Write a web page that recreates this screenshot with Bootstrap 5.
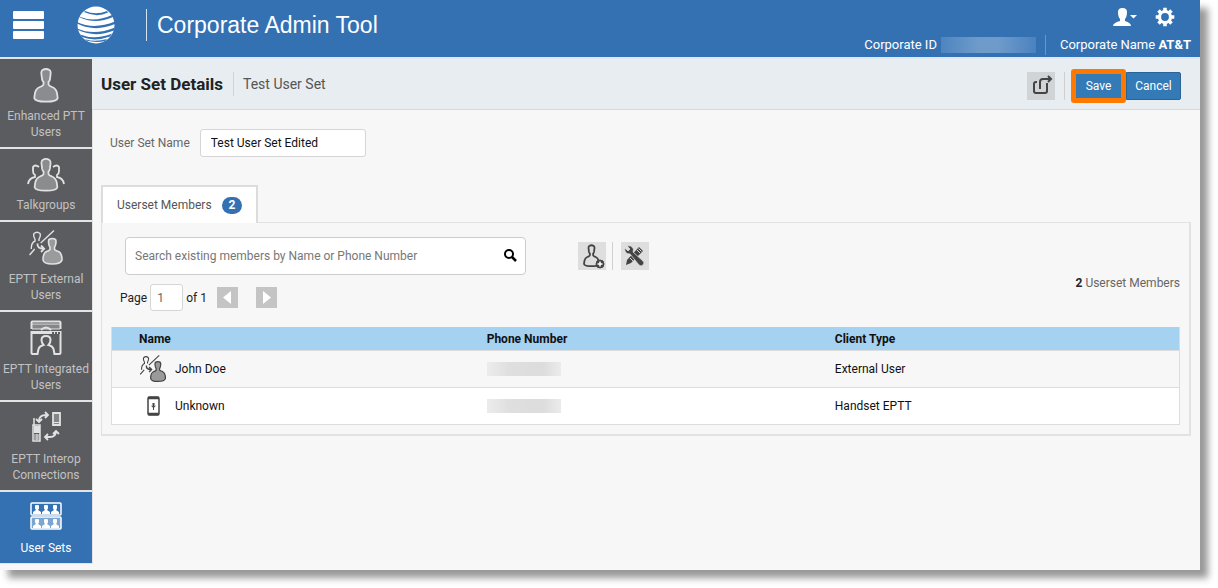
<!DOCTYPE html>
<html lang="en">
<head>
<meta charset="utf-8">
<meta name="viewport" content="width=device-width, initial-scale=1">
<title>Corporate Admin Tool</title>
<link href="https://cdn.jsdelivr.net/npm/bootstrap@5.3.0/dist/css/bootstrap.min.css" rel="stylesheet">
<style>
  body { font-family: Roboto, "Liberation Sans", Arial, sans-serif; font-size: 12px; line-height: 16px; color: #222; background: #fff; padding: 0 18px 18px 0; }
  .app { min-height: calc(100vh - 18px); background: #f7f7f7; box-shadow: 8px 8px 7px 0 #999; clip-path: inset(0 -18px -18px 0); }
  .topbar { background: #3371b3; color: #fff; height: 59px; border-bottom: 2px solid #dfe8f2; padding: 0 9px 0 12px; }
  .topbar .btn { color: #fff; padding: 0; border: 0; line-height: 1; }
  .brand-name { font-size: 23px; line-height: 32px; border-left: 1px solid #d5e2f0; padding-left: 10px; margin-left: 31px; font-family: "Liberation Sans", Arial, sans-serif; }
  .corp { font-size: 13px; line-height: 20px; }
  .redact { width: 95px; height: 16px; background: linear-gradient(90deg, #4d85bf, #6f9bcb 40%, #6f9bcb 60%, #4a82be); }
  .corp-name { border-left: 1px solid #6796c8; padding-left: 14px; margin-left: 9px; }
  .side { width: 92px; gap: 2px; }
  .side a { background: #5b5c5f; color: #c2c2c4; text-decoration: none; text-align: center; padding: 8px 0 7px; outline: 1px solid #e4e4e4; }
  .side a.current { background: #3371b3; color: #fff; }
  .side svg { display: block; margin: 0 auto 5px; }
  .titlebar { background: #e8edf1; border-bottom: 1px solid #d2dae1; height: 51px; padding: 0 19px 0 9px; }
  .titlebar h1 { font-size: 17px; line-height: 24px; font-weight: 700; }
  .set-label { font-size: 14px; line-height: 24px; border-left: 1px solid #d0d4d8; padding-left: 9px; margin-left: 10px; color: #555; }
  .tool { width: 28px; height: 28px; padding: 0; border: 0; border-radius: 0; background: #dedede; line-height: 1; }
  .titlebar .tool { background: #d0d4d6; }
  .rule { width: 1px; height: 28px; background: #d0d0d0; margin: 0 8px 0 6px; }
  .titlebar .rule { margin: 0 6px 0 9px; }
  .act { font-size: 12px; line-height: 16px; height: 28px; width: 55px; padding: 0; border-radius: 0 2px 2px 0; background: #337ab7; border-color: #2a6496; color: #fff; }
  .act.save { height: 34px; border: 5px solid #ff7900; border-radius: 3px; }
  .form-control { font-size: 12px; line-height: 16px; border-color: #d6d6d6; border-radius: 3px; color: #111; }
  .muted { color: #666; }
  .workspace { padding: 19px 9px 20px 9px; }
  .name-form { padding-left: 9px; gap: 10px; }
  .name-input { width: 166px; height: 28px; padding: 0 10px; }
  .nav-tabs { border: 0; margin-top: 28px; }
  .nav-tabs .nav-link.active { border: 2px solid #dcdcdc; border-width: 2px 2px 0; border-radius: 0; color: #555; background: #fff; padding: 9px 14px; font-size: 12px; line-height: 18px; }
  .count { font-size: 12px; line-height: 13px; background: #3371b3; border-radius: 9px; padding: 2px 7px; margin-left: 7px; }
  .panel { border: 2px solid #e2e2e2; border-width: 1px 2px 2px 1px; padding: 14px 9px 9px; }
  .search { width: 401px; height: 38px; margin-left: 14px; border: 1px solid #ccc; border-radius: 4px; background: #fff; }
  .search .form-control { background: transparent; padding: 0 9px; border: 0; }
  .search .form-control::placeholder { color: #777; }
  .search .btn { padding: 0 8px 3px; border: 0; line-height: 1; }
  .pager { padding: 9px 0 0 9px; }
  .page-no { width: 33px; height: 27px; padding: 0 6px; margin: 0 3px; color: #666; }
  .pg { width: 21px; height: 21px; padding: 0; border: 0; border-radius: 0; background: #c4c4c4; line-height: 1; }
  .pg.prev { margin: 0 18px 0 10px; }
  .members { margin: 16px 0 0; table-layout: fixed; border: 1px solid #ddd; border-top: 0; }
  .members th { background: #a5d2f1; border: 0; padding: 4px 0 3px 27px; line-height: 16px; color: #111; }
  .members th:not(:last-child) { width: 32.6%; }
  .members td { height: 37px; padding: 0 0 0 27px; border: 0; border-top: 1px solid #ddd; background: #fff; color: #111; vertical-align: middle; }
  .members tbody tr:first-child td { background: #f7f7f7; }
  .blurred { width: 74px; height: 14px; background: linear-gradient(90deg, #ececec, #dfdfdf 30%, #dcdcdc 75%, #ebebeb); }
  .who svg { width: 28px; }
</style>
</head>
<body>
<svg width="0" height="0" class="position-absolute" aria-hidden="true">
  <symbol id="person" viewBox="0 0 26 36"><path d="M9.500 3Q13 1 16.500 3Q18 4 17.600 7L17 12Q16.700 14 15.500 15V17.500Q16 19 19 20Q23 21.500 24 26L24.700 31Q24 34.700 13 34.700T1.300 31L2 26Q3 21.500 7 20Q10 19 10.500 17.500V15Q9.300 14 9 12L8.400 7Q8 4 9.500 3Z"/></symbol>
  <symbol id="external" viewBox="0 0 34 36"><g fill="none" stroke-width="1.400"><path d="M25 .5L11.700 13M5.700 19L.5 25M6 9Q4 6 5 3.500Q8 .8 11 3.500Q12 6 10 9M6 9v2Q2 13 2.300 19M10 9v2"/><path stroke-width="1.800" d="M8.500 13.500Q8 19 15 18.700M12 15.500L15.200 18.700L12 22"/></g><path stroke-width="1.600" d="M20 9.500Q23.300 7.500 26.500 9.500Q27.500 11 26.500 15L25.500 17.500V19.500Q27 21 29.500 21.500Q33 23 33 30Q32 34 23.300 34T14 30Q14 23 17.500 21.500Q20 21 21 19.500V17.500L20 15Q19 11 20 9.500Z"/></symbol>
</svg>

<div class="app d-flex flex-column">
  <header class="topbar d-flex align-items-center justify-content-between">
    <div class="d-flex align-items-center pb-2">
      <button class="btn" type="button" aria-label="Menu"><svg width="33" height="28" fill="#fff"><rect x="1" width="31" height="8" rx="1"/><rect x="1" y="10" width="31" height="8" rx="1"/><rect x="1" y="20" width="31" height="8" rx="1"/></svg></button>
      <svg class="ms-4 ps-2" width="46" height="38" viewBox="0 0 38 38" aria-label="AT&amp;T" role="img"><circle cx="19" cy="19" r="18.500" fill="#fff"/><g fill="#3371b3"><path d="M8 5Q19 9.500 30 5L31 6.500Q20 12 7 6Z"/><path d="M2 10.500Q17 17 35 9L36 11Q18 19 2 11Z"/><path d="M0 16Q17 24 38 15.500V18Q18 26.500 0 17.500Z"/><path d="M0 22.500Q17 30 38 21.500L37 24.500Q18 32 1 24Z"/><path d="M3 28.500Q18 34.500 35 27.500L33 30.500Q18 36 5 31Z"/><path d="M8 33.300Q19 36.500 30 33L28 35Q19 37 10 34.800Z"/></g></svg>
      <div class="brand-name">Corporate Admin Tool</div>
    </div>
    <div class="d-flex flex-column align-items-end pt-1">
      <div class="d-flex align-items-center gap-3 pe-3">
        <button class="btn" type="button" aria-label="Account"><svg width="26" height="20" fill="#fff"><path d="M5 5Q5 1 9.500 1T14 5Q14 10 12 12v2q6 2 6 5H0q0-3 7-5v-2Q5 10 5 5ZM17 8h7l-3.500 3.500Z"/></svg></button>
        <button class="btn" type="button" aria-label="Settings"><svg width="20" height="20" viewBox="0 0 20 20"><circle cx="10" cy="10" r="5.500" fill="none" stroke="#fff" stroke-width="3.200"/><g stroke="#fff" stroke-width="3.600"><path d="M10 .7V4M10 16v3.300M.7 10H4M16 10h3.300M3.500 3.500L6 6M14 14l2.500 2.500M3.500 16.500L6 14M14 6l2.500-2.500"/></g></svg></button>
      </div>
      <div class="corp d-flex align-items-center pt-2">
        <span>Corporate ID</span><span class="redact ms-1"></span>
        <span class="corp-name">Corporate Name <b>AT&amp;T</b></span>
      </div>
    </div>
  </header>

  <div class="d-flex flex-grow-1">
    <nav class="side d-flex flex-column flex-shrink-0" aria-label="Sections">
      <a href="#"><svg width="26" height="36" fill="#8b8c8f" stroke="#e2e2e3" stroke-width="1.800"><use href="#person"/></svg>Enhanced PTT<br>Users</a>
      <a href="#"><svg width="40" height="35" fill="#8b8c8f" stroke="#e2e2e3" stroke-width="1.800"><path fill="none" d="M13 10q-4-3-6 0v4q0 3 2 4v2q-6 1-7 7M27 10q4-3 6 0v4q0 3-2 4v2q6 1 7 7"/><use href="#person" x="7" width="26" height="35"/></svg>Talkgroups</a>
      <a href="#"><svg width="34" height="36" fill="#9a9b9d" stroke="#e2e2e3"><use href="#external"/></svg>EPTT External<br>Users</a>
      <a href="#"><svg width="34" height="36" fill="none" stroke="#e2e2e3" stroke-width="2"><path d="M2.500 9V2.500q0-1 1-1h27q1 0 1 1V9"/><path fill="#85868a" stroke-width="1" d="M3 4h28v5H3Z"/><path d="M12 10q5-5 10 0"/><path d="M2.500 33V12h29v21q0 1-1 1h-5l-1-5q-1-3-5-4q2-2 2-5q0-4-4.500-4t-4.500 4q0 3 2 5q-4 1-5 4l-1 5h-5q-1 0-1-1Z"/><path stroke-width="3" d="M3 12.500h29"/><path stroke="#5b5c5f" stroke-dasharray="2 1" d="M23 13h8"/></svg>EPTT Integrated<br>Users</a>
      <a href="#"><svg width="34" height="36" fill="none" stroke="#e2e2e3" stroke-width="1.800"><path fill="#85868a" d="M24 3h7v12h-7Z"/><path stroke-width="1" d="M24 12.500h7"/><path stroke-width="1.500" d="M5 8v8M4 15h7v16H4Z"/><path fill="#e2e2e3" stroke="none" d="M5 16h6v7H5Z"/><path stroke-width="1" d="M5 25h6m-6 2h6m-6 2h6M8 24v6"/><path d="M10 11q0-6 7-6h2m-3-3l3 3-3 3M7 9l3 3 3-3M16 27h5q6 0 6-6m-8 3l-3 3 3 3m5-6l3-3 3 3"/></svg>EPTT Interop<br>Connections</a>
      <a href="#" class="current" aria-current="page"><svg width="34" height="35" fill="none" stroke="#fff" stroke-width="1.500"><rect x="2" y="3" width="30" height="12" rx="1"/><rect x="2" y="17" width="30" height="12" rx="1" fill="#7da5d1"/><g fill="#fff" stroke="none"><path id="bust" d="M7 5h2q1 0 1 1v2q0 1-1 2l3 2v2H4v-2l3-2q-1-1-1-2V6q0-1 1-1Z"/><use href="#bust" x="9"/><use href="#bust" x="18"/><use href="#bust" y="14"/><use href="#bust" x="9" y="14"/><use href="#bust" x="18" y="14"/></g></svg>User Sets</a>
    </nav>

    <main class="flex-grow-1">
      <div class="titlebar d-flex align-items-center">
        <h1 class="m-0">User Set Details</h1><span class="set-label">Test User Set</span>
        <div class="d-flex align-items-center ms-auto mt-1">
          <button class="btn tool" type="button" aria-label="Share"><svg width="24" height="24" viewBox="0 0 24 24" fill="none" stroke="#444" stroke-width="2"><path d="M8 8H7Q5 8 5 10v7q0 2 2 2h9q2 0 2-2V9"/><path d="M11 15V8q0-3 3-3h7M19 2l3 3-3 3"/></svg></button>
          <span class="rule"></span>
          <button class="btn act save" type="submit" form="userset">Save</button><button class="btn act" type="button">Cancel</button>
        </div>
      </div>

      <div class="workspace">
        <form id="userset" class="name-form d-flex align-items-center">
          <label for="setname" class="muted">User Set Name</label>
          <input id="setname" class="form-control name-input" type="text" value="Test User Set Edited">
        </form>

        <ul class="nav nav-tabs"><li class="nav-item"><a class="nav-link active" href="#members">Userset Members <span class="badge count">2</span></a></li></ul>
        <section id="members" class="panel">
          <div class="d-flex align-items-center">
            <form class="search d-flex align-items-center" role="search">
              <input class="form-control" type="search" aria-label="Search members" placeholder="Search existing members by Name or Phone Number">
              <button class="btn" type="button" aria-label="Search"><svg width="14" height="14" fill="none" stroke="#000" stroke-width="2"><circle cx="6" cy="6" r="4"/><path stroke-width="2.500" d="M9 9l4 4"/></svg></button>
            </form>
            <div class="d-flex align-items-center ms-5 ps-1">
              <button class="btn tool" type="button" aria-label="Add member"><svg width="26" height="26" viewBox="0 0 26 26" fill="none" stroke="#444"><use href="#person" x="3" y="1" width="19" height="23" stroke-width="2.800"/><circle cx="21" cy="21" r="4" fill="#444"/><path stroke="#fff" stroke-width="1.500" d="M18.500 21h5M21 18.500v5"/></svg></button>
              <span class="rule"></span>
              <button class="btn tool" type="button" aria-label="Tools"><svg width="22" height="22" viewBox="0 0 22 22" fill="#444"><path d="M15 2l4 4L7 18l-5 2 1-5Z"/><path stroke="#ddd" d="M6 13l3 3M13 5l3 3M14.500 3.500l3 3"/><path stroke="#dedede" stroke-width=".8" d="M1 3l3 3 2-2-3-3q4-1 6 2 1 2 0 4l10 9q2 2 0 4t-4 0L6 9Q0 9 1 3Z"/></svg></button>
            </div>
          </div>
          <div class="d-flex justify-content-between">
            <div class="pager d-flex align-items-center">
              <label for="page">Page</label><input id="page" class="form-control page-no" type="text" value="1"><span>of 1</span>
              <button class="btn pg prev" type="button" aria-label="Previous page"><svg width="21" height="21" fill="#fff"><path d="M14 4v13L6 10.500Z"/></svg></button>
              <button class="btn pg" type="button" aria-label="Next page"><svg width="21" height="21" fill="#fff"><path d="M7 4v13l8-6.500Z"/></svg></button>
            </div>
            <div class="muted"><b class="text-dark">2</b> Userset Members</div>
          </div>
          <table class="table members">
            <thead><tr><th scope="col">Name</th><th scope="col">Phone Number</th><th scope="col">Client Type</th></tr></thead>
            <tbody>
              <tr><td><div class="who d-flex align-items-center gap-2"><svg height="28" fill="#9a9a9a" stroke="#444"><use href="#external"/></svg>John Doe</div></td><td><div class="blurred"></div></td><td>External User</td></tr>
              <tr><td><div class="who d-flex align-items-center gap-2"><svg height="22" fill="none" stroke="#444"><rect x="9" y="2" width="11" height="18" rx="1.500" stroke-width="1.500"/><path stroke-width="2.500" d="M9 3h11M9 19h11"/><path stroke-width="2" d="M14.500 8v4"/><path d="M12.500 11q2 3 4 0M14.500 12v3"/></svg>Unknown</div></td><td><div class="blurred"></div></td><td>Handset EPTT</td></tr>
            </tbody>
          </table>
        </section>
      </div>
    </main>
  </div>
</div>
<script src="https://cdn.jsdelivr.net/npm/bootstrap@5.3.0/dist/js/bootstrap.bundle.min.js"></script>
</body>
</html>
